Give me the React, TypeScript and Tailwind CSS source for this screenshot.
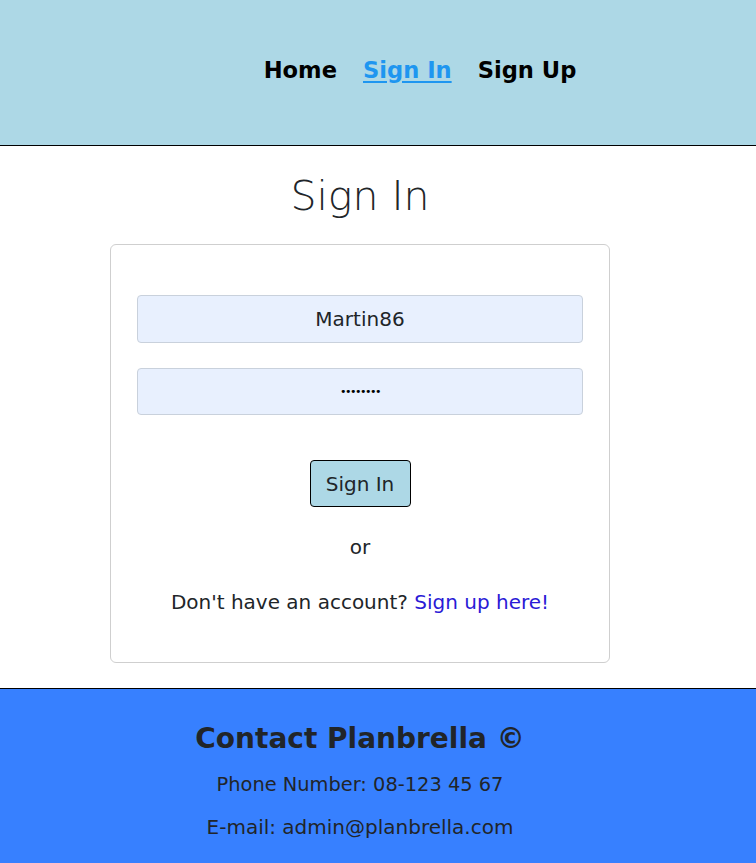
import React from 'react';

const font = { fontFamily: '"DejaVu Sans", "Noto Sans", sans-serif' };

function Header() {
  return (
    <header className="h-[146px] bg-[#add8e6] border-b border-black">
      <nav className="w-[720px] h-full flex items-center justify-center gap-[26px] pl-[120px] text-[22.6px] font-bold text-black pb-[4px]">
        <a href="#" className="hover:text-[#1e96f0]">Home</a>
        <a href="#" className="text-[#1e96f0] underline underline-offset-[3px]">Sign In</a>
        <a href="#" className="hover:text-[#1e96f0]">Sign Up</a>
      </nav>
    </header>
  );
}

function SignInForm() {
  return (
    <main className="w-[720px] flex flex-col items-center pt-[27px] pb-[25px]">
      <h1 className="text-[41px] font-light text-[#212529] leading-[46px]">Sign In</h1>
      <div className="mt-[25px] w-[500px] h-[419px] border border-[#cfcfcf] rounded-[6px] px-[26px] pt-[50px] flex flex-col items-center">
        <input
          readOnly
          value="Martin86"
          className="w-full h-[48px] bg-[#e8f0fe] border border-[#c9d1dc] rounded-[4px] text-center text-[20px] text-[#212529] outline-none"
        />
        <input
          readOnly
          type="password"
          value="ssssssss"
          className="mt-[25px] w-full h-[47px] bg-[#e8f0fe] border border-[#c9d1dc] rounded-[4px] text-center text-[11px] tracking-[-1.5px] text-black outline-none"
        />
        <button className="mt-[45px] w-[101px] h-[47px] bg-[#add8e6] border border-black rounded-[4px] text-[20px] text-[#212529]">
          Sign In
        </button>
        <p className="mt-[25px] text-[20px] text-[#212529]">or</p>
        <p className="mt-[25px] text-[20px] text-[#212529]">
          Don't have an account? <a href="#" className="text-[#2a1ad6]">Sign up here!</a>
        </p>
      </div>
    </main>
  );
}

function Footer() {
  return (
    <footer className="h-[175px] bg-[#3780ff] border-t border-black">
      <div className="w-[720px] flex flex-col items-center pt-[32px] text-[#212529]">
        <h2 className="text-[28px] font-bold leading-[36px]">Contact Planbrella ©</h2>
        <p className="mt-[14px] text-[19.4px] leading-[28px]">Phone Number: 08-123 45 67</p>
        <p className="mt-[14px] text-[20px] leading-[28px]">E-mail: admin@planbrella.com</p>
      </div>
    </footer>
  );
}

export default function App() {
  return (
    <div style={font} className="w-[756px] min-h-[863px] bg-white">
      <Header />
      <SignInForm />
      <Footer />
    </div>
  );
}
